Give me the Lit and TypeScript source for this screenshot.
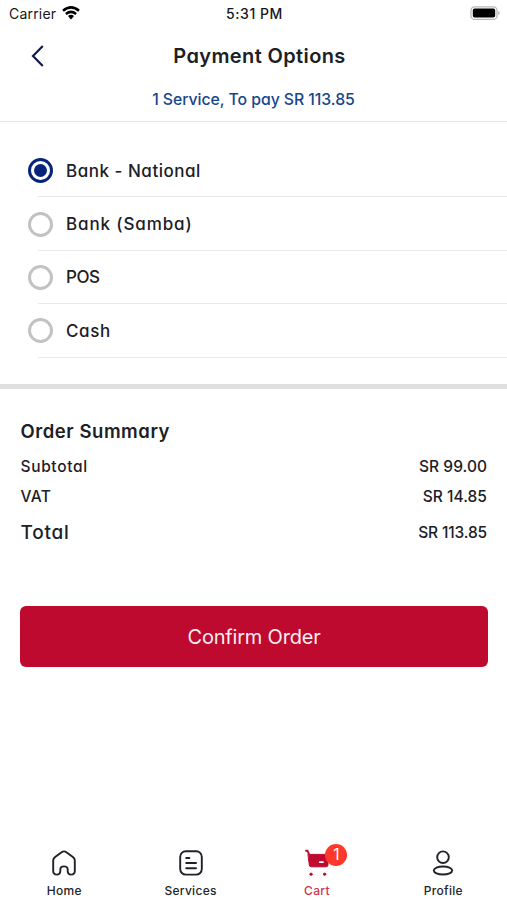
import { LitElement, html, css, svg, nothing } from "lit";
import { customElement, property, state } from "lit/decorators.js";
import { classMap } from "lit/directives/class-map.js";

const ICONS: Record<string, unknown> = {
  home: svg`<path d="M1.200 10.600c0-1.500.5-2.400 1.600-3.300L9.600 2.200q2.400-1.700 4.800 0l6.800 5.100c1.100.9 1.600 1.800 1.600 3.300v10.200c0 2.400-1.600 3.800-3.700 3.800s-3.400-1.400-3.400-3.500v-1.500c0-2-1.400-3.200-3.700-3.200s-3.700 1.200-3.700 3.200v1.500c0 2.100-1.300 3.500-3.400 3.500s-3.700-1.400-3.700-3.800z"/>`,
  services: svg`<rect x="1.200" y="1.300" width="21.600" height="23.300" rx="5.600"/><path d="M7.200 8h3.200M7.200 13h9.800M7.200 18.200h9.800"/>`,
  profile: svg`<circle cx="12" cy="7.200" r="5.800"/><ellipse cx="12" cy="20.500" rx="9.200" ry="4"/>`,
};

@customElement("tab-item")
class TabItem extends LitElement {
  @property() icon = "";
  @property() label = "";
  @property({ type: Number }) count = 0;
  @property({ type: Boolean, reflect: true }) active = false;
  static styles = css`
    :host { display: flex; flex-direction: column; align-items: center; width: 126.400px; color: #24262b; font: 500 12px/16px Inter, sans-serif; letter-spacing: 0.300px; }
    :host([active]) { color: #cc3450; }
    .icon { position: relative; height: 34px; width: 24px; }
    svg { display: block; width: 24px; height: 34px; fill: none; stroke: #202228; stroke-width: 1.900; stroke-linecap: round; stroke-linejoin: round; overflow: visible; }
    .cart { fill: #bd0a2e; stroke: #bd0a2e; }
    .badge { position: absolute; left: 20.500px; top: 0; width: 22px; height: 22px; border-radius: 50%; background: #ff382c; color: #fff; font-size: 15.500px; line-height: 22px; text-align: center; font-weight: 400; letter-spacing: 0; }
    .label { margin-top: 5px; }
  `;
  render() {
    return html`
      <div class="icon">
        ${this.icon === "cart"
          ? html`<svg class="cart" viewBox="0 -6 24 34">
              <path d="M1 .800h1.600l1.200 3" fill="none" />
              <path d="M3.300 4.400h19.700v10.400q0 2-2 2H6.200q-1.700 0-1.900-1.700z" stroke-width="1" />
              <path d="M14.800 12.200h3.200" stroke="#fff" stroke-width="1.700" />
              <circle cx="6" cy="24.200" r="1.200" stroke-width=".8" />
              <circle cx="19.600" cy="24.200" r="1.200" stroke-width=".8" />
            </svg>`
          : html`<svg viewBox="0 -6 24 34">${ICONS[this.icon]}</svg>`}
        ${this.count ? html`<span class="badge">${this.count}</span>` : nothing}
      </div>
      <div class="label">${this.label}</div>
    `;
  }
}

@customElement("app-root")
class AppRoot extends LitElement {
  @state() selected = 0;
  options = [
    ["Bank - National", "national"],
    ["Bank (Samba)", "samba"],
    ["POS", "pos"],
    ["Cash", "cash"],
  ];
  static styles = css`
    :host { display: flex; flex-direction: column; height: 900px; background: #fff; color: #1c2026; font-family: Inter, sans-serif; font-feature-settings: "cv11"; overflow: hidden; }
    .status { display: grid; grid-template-columns: 1fr auto 1fr; align-items: center; height: 27px; padding: 0 7px 0 9px; font-size: 14px; color: #15171a; font-feature-settings: normal; }
    .carrier { display: flex; align-items: center; gap: 6px; letter-spacing: 0.200px; }
    .carrier svg { margin-top: -2px; }
    .time { font-weight: 500; letter-spacing: 0.550px; }
    .battery { justify-self: end; display: block; margin-top: -1px; }
    .bar { display: grid; grid-template-columns: 72px 1fr 60px; align-items: center; height: 57px; }
    .back { display: block; margin-left: 30px; }
    h1 { margin: 0; text-align: center; font-size: 20px; font-weight: 600; line-height: 28px; letter-spacing: 0.380px; }
    .note { height: 32px; line-height: 32px; text-align: center; color: #17468b; font-size: 15.800px; font-weight: 500; letter-spacing: -0.050px; }
    .head { height: 94px; border-bottom: 1px solid #e6e6e6; }
    .options { padding-top: 22px; }
    .option { display: flex; align-items: center; gap: 13px; height: 53.400px; padding-left: 28px; font-size: 17px; line-height: 20px; font-weight: 500; letter-spacing: 0.500px; box-sizing: border-box; background: linear-gradient(#e9e9e9, #e9e9e9) 38px 100% / 100% 1px no-repeat; }
    .national { letter-spacing: 0.520px; }
    .samba { letter-spacing: 0.880px; }
    .pos { letter-spacing: -0.500px; }
    .cash { letter-spacing: 0.650px; }
    .radio { display: flex; align-items: center; justify-content: center; box-sizing: border-box; width: 25px; height: 25px; border: 3px solid #c2c2c6; border-radius: 50%; }
    .radio.on { border-color: #06247a; }
    .radio.on::after { content: ""; width: 13px; height: 13px; border-radius: 50%; background: #06247a; }
    .divider { height: 5px; margin-top: 26px; background: #e0e0e0; }
    .summary { padding: 27px 20px 0 20.500px; }
    h2 { margin: 0; font-size: 18.500px; line-height: 30px; font-weight: 600; letter-spacing: 0.550px; }
    .row { display: flex; justify-content: space-between; align-items: center; height: 30px; font-size: 15.500px; font-weight: 500; }
    .row:nth-of-type(1) { margin-top: 6px; }
    .sub { letter-spacing: 0.650px; }
    .vat { letter-spacing: 0.400px; }
    .amount { letter-spacing: 0.050px; }
    .total { height: 41px; }
    .total .name { font-size: 19px; letter-spacing: 0.750px; }
    .total .amount { letter-spacing: -0.150px; }
    .confirm { display: block; height: 61px; margin: 53px 19px 0 20px; padding: 1px 0 0; border: 0; border-radius: 6px; background: #bd0a2e; color: #ffeef1; font: 400 20px/60px Inter, sans-serif; letter-spacing: -0.200px; flex: none; }
    .tabs { display: flex; margin-top: auto; height: 56px; padding-left: 1px; }
  `;
  render() {
    return html`
      <div class="status">
        <div class="carrier"><span>Carrier</span>
          <svg width="18" height="14" viewBox="0 0 18 14"><g fill="none" stroke="#000" stroke-width="2.500"><path d="M1 4.800Q9-2 17 4.800M3.900 8Q9 3.700 14.100 8"/></g><path d="M6 10.100Q9 7.500 12 10.100L9 13.400Z"/></svg>
        </div>
        <span class="time">5:31 PM</span>
        <svg class="battery" width="30" height="14" viewBox="0 0 30 14"><rect x="1" y=".8" width="26" height="12.600" rx="3.600" fill="#fff" stroke="#b8b8b8" stroke-width="1.300"/><rect x="2.800" y="2.600" width="22.400" height="9" rx="1.800"/><path d="M28.200 5q1.600.4 1.600 2t-1.600 2z" fill="#b8b8b8"/></svg>
      </div>
      <div class="head">
        <div class="bar">
          <svg class="back" width="16" height="24" viewBox="0 0 16 24" fill="none" stroke="#101c4c" stroke-width="2.200"><path d="M12.800 2L3 12l9.800 10"/></svg>
          <h1>Payment Options</h1>
        </div>
        <div class="note">1 Service, To pay SR 113.85</div>
      </div>
      <div class="options">
        ${this.options.map(
          ([name, key], i) => html`<div class="option" @click=${() => (this.selected = i)}>
            <span class=${classMap({ radio: true, on: i === this.selected })}></span>
            <span class=${key}>${name}</span>
          </div>`
        )}
      </div>
      <div class="divider"></div>
      <section class="summary">
        <h2>Order Summary</h2>
        <div class="row"><span class="sub">Subtotal</span><span class="amount">SR 99.00</span></div>
        <div class="row"><span class="vat">VAT</span><span class="amount">SR 14.85</span></div>
        <div class="row total"><span class="name">Total</span><span class="amount">SR 113.85</span></div>
      </section>
      <button class="confirm">Confirm Order</button>
      <nav class="tabs">
        <tab-item icon="home" label="Home"></tab-item>
        <tab-item icon="services" label="Services"></tab-item>
        <tab-item icon="cart" label="Cart" count="1" active></tab-item>
        <tab-item icon="profile" label="Profile"></tab-item>
      </nav>
    `;
  }
}
